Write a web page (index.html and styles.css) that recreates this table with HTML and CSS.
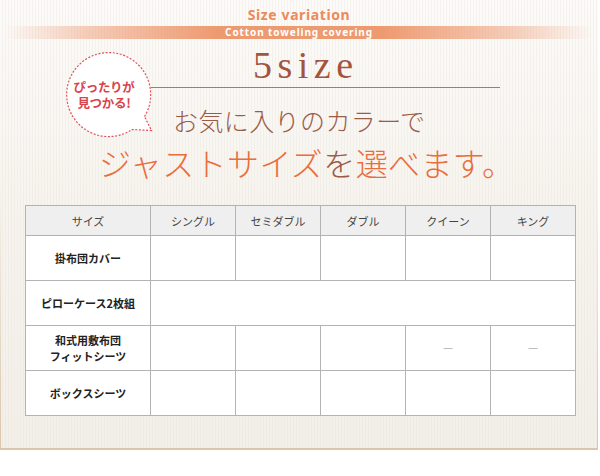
FILE: index.html
```html
<!DOCTYPE html>
<html lang="ja">
<head>
<meta charset="utf-8">
<title>Size variation</title>
<link rel="stylesheet" href="styles.css">
</head>
<body>
<div class="page">
  <header class="head">
    <h2 class="eyebrow">Size variation</h2>
    <div class="band"><span>Cotton toweling covering</span></div>
  </header>

  <section class="hero">
    <div class="hero-top">
      <div class="bubble">
        <svg class="bubble-shape" width="92" height="90" viewBox="0 0 92 90" aria-hidden="true">
          <path d="M80.5 64.5 A42 42 0 1 0 68 77.5 L87.5 78.5 Z" fill="#fff" stroke="#e0515b" stroke-width="1.2" stroke-dasharray="2 1.6"/>
        </svg>
        <p class="bubble-text">ぴったりが<br>見つかる!</p>
      </div>
      <div class="hero-main">
        <div class="title">5size</div>
        <div class="rule"></div>
        <p class="lead">お気に入りのカラーで</p>
      </div>
    </div>
    <p class="catch"><span class="accent">ジャストサイズ</span>を<span class="accent">選べます。</span></p>
  </section>

  <table class="sizes">
    <thead>
      <tr>
        <th class="label-col">サイズ</th>
        <th>シングル</th>
        <th>セミダブル</th>
        <th>ダブル</th>
        <th>クイーン</th>
        <th>キング</th>
      </tr>
    </thead>
    <tbody>
      <tr>
        <td class="label">掛布団カバー</td>
        <td></td><td></td><td></td><td></td><td></td>
      </tr>
      <tr>
        <td class="label">ピローケース2枚組</td>
        <td colspan="5"></td>
      </tr>
      <tr>
        <td class="label">和式用敷布団<br>フィットシーツ</td>
        <td></td><td></td><td></td><td class="dash">―</td><td class="dash">―</td>
      </tr>
      <tr>
        <td class="label">ボックスシーツ</td>
        <td></td><td></td><td></td><td></td><td></td>
      </tr>
    </tbody>
  </table>
</div>
</body>
</html>
```

FILE: styles.css
```css
html, body {
  margin: 0;
  padding: 0;
  background: #ffffff;
}

.page {
  width: 598px;
  height: 448px;
  box-sizing: content-box;
  border-bottom: 2px solid #d9c6ad;
  background:
    linear-gradient(to bottom, rgba(217,198,173,0) 40%, rgba(217,198,173,1) 100%) left top / 1px 100% no-repeat,
    linear-gradient(to bottom, rgba(217,198,173,0) 40%, rgba(217,198,173,1) 100%) right top / 1px 100% no-repeat,
    repeating-linear-gradient(90deg, rgba(255,255,255,0) 0 2px, rgba(214,202,186,0.16) 2px 3px),
    linear-gradient(to bottom, #fcfbf9 0%, #f7f4ef 45%, #f3efe9 100%);
  font-family: "Noto Sans CJK JP", "Noto Sans", sans-serif;
  overflow: hidden;
}

/* header */
.head {
  padding-top: 6px;
  display: flex;
  flex-direction: column;
  align-items: center;
}
.eyebrow {
  margin: 0;
  font-family: "Noto Sans", "Open Sans", sans-serif;
  font-weight: 700;
  font-size: 14px;
  line-height: 18px;
  letter-spacing: 0.6px;
  color: #ec8a5a;
  height: 20px;
}
.band {
  width: 590px;
  height: 13px;
  display: flex;
  align-items: center;
  justify-content: center;
  background: linear-gradient(90deg, rgba(238,150,110,0) 0%, rgba(238,150,110,0.45) 14%, #ee9a70 36%, #ee9a70 64%, rgba(238,150,110,0.45) 86%, rgba(238,150,110,0) 100%);
}
.band span {
  font-family: "Noto Sans", "Open Sans", sans-serif;
  font-weight: 700;
  font-size: 10px;
  line-height: 13px;
  letter-spacing: 0.9px;
  color: #ffffff;
}

/* hero */
.hero {
  padding-top: 6px;
  box-sizing: border-box;
  height: 166px;
}
.hero-top {
  display: flex;
}
.bubble {
  position: relative;
  width: 92px;
  height: 90px;
  margin-left: 64px;
  margin-top: 7px;
  flex: none;
}
.bubble-shape {
  position: absolute;
  left: 0;
  top: 0;
}
.bubble-text {
  position: relative;
  margin: 0;
  padding-top: 27px;
  width: 80px;
  text-align: center;
  font-family: "Noto Sans CJK JP", sans-serif;
  font-weight: 700;
  font-size: 12.5px;
  line-height: 16px;
  color: #d9434d;
  letter-spacing: -0.3px;
}
.hero-main {
  width: 349px;
  margin-left: -5px;
  flex: none;
}
.title {
  padding-left: 102px;
  font-family: "Liberation Serif", "DejaVu Serif", serif;
  font-size: 38px;
  line-height: 40px;
  letter-spacing: 5.5px;
  color: #a4543c;
}
.rule {
  margin-top: 2px;
  height: 1px;
  background: #b77560;
}
.lead {
  margin: 20px 0 0 22px;
  font-family: "Noto Sans CJK JP", sans-serif;
  font-weight: 300;
  font-size: 25px;
  line-height: 25px;
  color: #9a5c4a;
  letter-spacing: 0.4px;
  white-space: nowrap;
}
.catch {
  margin: 2px 0 0 99px;
  font-family: "Noto Sans CJK JP", sans-serif;
  font-weight: 300;
  font-size: 32px;
  line-height: 36px;
  letter-spacing: 0.4px;
  color: #9a5c4a;
  white-space: nowrap;
}
.accent {
  color: #ea6d3d;
}

/* table */
.sizes {
  margin-left: 25px;
  border-collapse: collapse;
  table-layout: fixed;
  width: 551px;
  background: #ffffff;
  font-size: 11px;
  color: #333;
}
.sizes th, .sizes td {
  border: 1px solid #b3b3b3;
  text-align: center;
  vertical-align: middle;
  padding: 0;
}
.sizes th {
  background: #efefef;
  height: 29px;
  font-weight: 400;
  color: #444;
  width: 84px;
}
.sizes th.label-col {
  width: 124px;
}
.sizes td {
  height: 44px;
}
.sizes td.label {
  font-weight: 700;
  color: #222;
  line-height: 16px;
}
.sizes td.dash {
  color: #888;
  font-family: "DejaVu Sans", sans-serif;
  font-size: 9px;
  line-height: 12px;
}
```
